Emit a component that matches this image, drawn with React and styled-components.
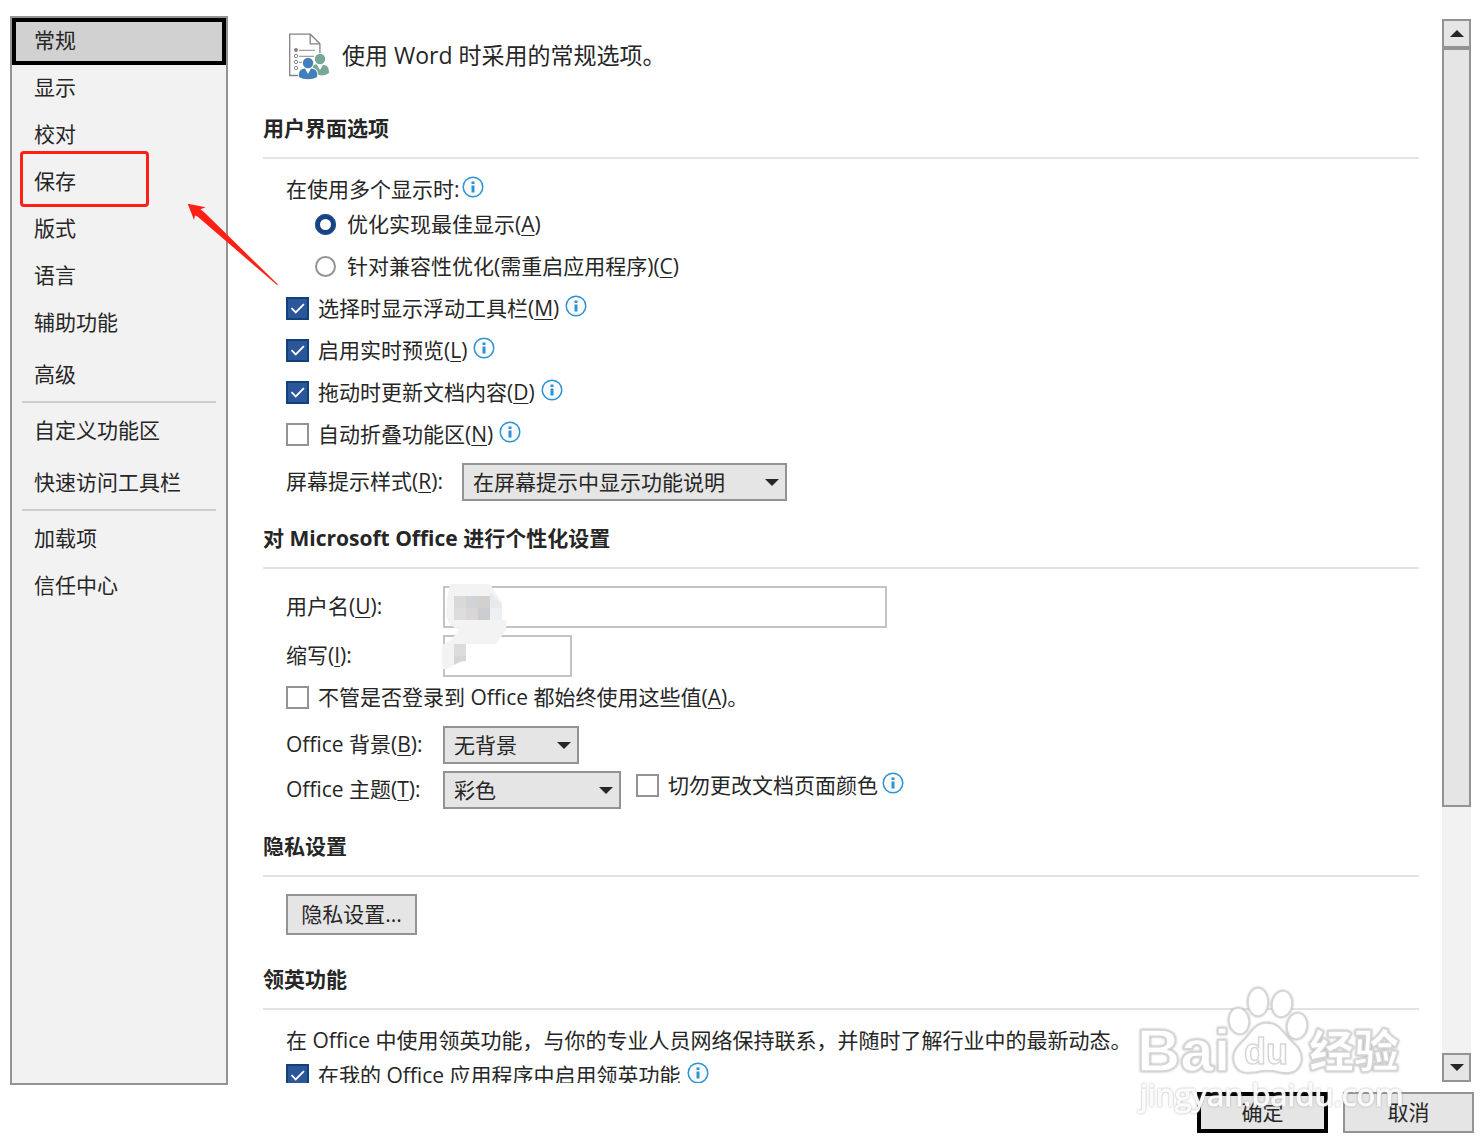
import { useState } from "react";
import styled, { createGlobalStyle, css } from "styled-components";

const GlobalStyle = createGlobalStyle`
  * {
    box-sizing: border-box;
  }

  body {
    margin: 0;
    background: #fff;
    color: #262626;
    font-family: "Open Sans", "Noto Sans CJK SC", sans-serif;
    font-size: 21px;
    line-height: 28px;
  }

  button,
  input,
  select {
    margin: 0;
    font: inherit;
    color: inherit;
    border-radius: 0;
  }
`;

const Page = styled.div`
  display: flex;
  flex-direction: column;
  height: 100vh;
  padding: 16px 8px 13px 10px;
  position: relative;
  overflow: hidden;
`;

const Body = styled.div`
  display: flex;
  flex: 1;
  min-height: 0;
`;

const Sidebar = styled.nav`
  position: relative;
  flex: 0 0 218px;
  border: 2px solid #939393;
  background: #f2f2f2;
`;

const NavItem = styled.button`
  display: block;
  position: relative;
  width: 100%;
  height: 47px;
  padding: 0 18px 3px;
  border: 4px solid ${(props) => (props.$active ? "#000" : "transparent")};
  background: ${(props) => (props.$active ? "#d1d1d1" : "transparent")};
  text-align: left;
  margin-top: ${(props) => (props.$spaced ? "5px" : "0")};
`;

const NavDivider = styled.hr`
  height: 2px;
  margin: 2px 10px 5px;
  border: 0;
  background: #cfcfcf;
`;

const Highlight = styled.span`
  position: absolute;
  top: -12px;
  left: 4px;
  width: 129px;
  height: 56px;
  border: 3px solid #ff2015;
  border-radius: 4px;
`;

const Arrow = styled.svg`
  position: absolute;
  top: 184px;
  left: 174px;
  z-index: 1;
  pointer-events: none;
`;

const Content = styled.main`
  flex: 1;
  min-width: 0;
  margin-bottom: 2px;
  padding: 16px 23px 0 35px;
  overflow: hidden;
`;

const PageHeader = styled.header`
  display: flex;
  align-items: center;
  gap: 12px;
  height: 48px;
  padding-left: 26px;
  margin-bottom: 35px;
`;

const PageTitle = styled.h1`
  margin: 0;
  padding-bottom: 2px;
  font-size: 23px;
  font-weight: 400;
`;

const Section = styled.section`
  margin-bottom: ${(props) => (props.$roomy ? "31px" : "24px")};
`;

const SectionTitle = styled.h2`
  margin: 0;
  padding-bottom: 16px;
  border-bottom: 2px solid #e3e3e3;
  font-size: 21px;
  font-weight: 700;
  line-height: 26px;
`;

const SectionBody = styled.div`
  padding: 17px 0 0 23px;
`;

const TextLine = styled.p`
  display: flex;
  align-items: center;
  gap: 2px;
  margin: 0;
  height: 27px;
  padding-bottom: 2px;
  white-space: nowrap;
`;

const OptionLine = styled.div`
  display: flex;
  align-items: center;
  height: ${(props) => (props.$compact ? "28px" : "42px")};
  gap: ${(props) => (props.$compact ? "4px" : "6px")};
  padding-left: ${(props) => (props.$indent ? "29px" : "0")};
  margin-left: ${(props) => (props.$compact ? "15px" : "0")};
  align-self: flex-start;
`;

const OptionLabel = styled.label`
  display: flex;
  align-items: center;
  gap: ${(props) => (props.$radio ? "11px" : "9px")};
  white-space: nowrap;
`;

const CheckHolder = styled.span`
  display: grid;
  margin-top: 1px;

  > * {
    grid-area: 1 / 1;
  }

  svg {
    visibility: hidden;
    pointer-events: none;
  }

  input:checked + svg {
    visibility: visible;
  }
`;

const CheckInput = styled.input`
  appearance: none;
  width: 23px;
  height: 23px;
  border: 2px solid #939393;
  background: #fff;

  &:checked {
    border-color: #124079;
    background: #2b579a;
  }
`;

const RadioInput = styled.input`
  appearance: none;
  width: 21px;
  height: 21px;
  border: 2px solid #939393;
  border-radius: 50%;
  background: #fff;

  &:checked {
    border: 5px solid #174481;
    outline: 1px solid #2b579a;
    outline-offset: -1px;
  }
`;

const InfoMark = styled.svg`
  flex: none;
  margin-bottom: 4px;
`;

const AccessKey = styled.u`
  text-decoration-thickness: 1px;
  text-underline-offset: 3px;
`;

const FieldRow = styled.div`
  display: flex;
  align-items: center;
  margin-top: ${(props) => (props.$spaced ? "8px" : "0")};
  margin-bottom: ${(props) => (props.$last ? "0" : "7px")};
`;

const FieldLabel = styled.label`
  flex: none;
  width: ${(props) => (props.$auto ? "auto" : "157px")};
  margin-right: ${(props) => (props.$auto ? "19px" : "0")};
  padding-bottom: 2px;
`;

const fieldBorder = css`
  border: 2px solid #939393;
  background: #e5e5e5;
`;

const TextInput = styled.input`
  width: ${(props) => props.$width};
  height: 42px;
  padding: 0 9px;
  border: 2px solid #c3c3c3;
  background: #fff;
`;

const SelectHolder = styled.span`
  position: relative;
  display: block;
  width: ${(props) => props.$width};

  svg {
    position: absolute;
    top: 16px;
    right: 8px;
    pointer-events: none;
  }
`;

const SelectInput = styled.select`
  ${fieldBorder}
  appearance: none;
  display: block;
  width: 100%;
  height: 38px;
  padding: 0 30px 0 9px;
`;

const Button = styled.button`
  ${fieldBorder}
  width: 131px;
  height: 41px;
  padding: 0 0 2px;

  ${(props) =>
    props.$primary &&
    css`
      border: 4px solid #000;
    `}
`;

const NameFields = styled.div`
  position: relative;
  margin-bottom: -8px;
`;

const Mosaic = styled.svg`
  position: absolute;
  top: -2px;
  left: 156px;
  pointer-events: none;
`;

const ScrollBar = styled.div`
  display: flex;
  flex-direction: column;
  flex: 0 0 29px;
  margin: 3px 3px 3px 0;
  background: #f2f2f2;
`;

const ScrollButton = styled.button`
  ${fieldBorder}
  display: flex;
  align-items: center;
  justify-content: center;
  height: 29px;
  padding: 0;
`;

const ScrollTrack = styled.div`
  flex: 1;
`;

const ScrollThumb = styled.div`
  ${fieldBorder}
  height: 75.5%;
`;

const Footer = styled.footer`
  display: flex;
  justify-content: flex-end;
  gap: 15px;
  margin-top: 7px;
`;

const Watermark = styled.svg`
  position: absolute;
  right: 72px;
  bottom: 26px;
  pointer-events: none;
`;

const navGroups = [
  [
    { name: "常规" },
    { name: "显示" },
    { name: "校对" },
    { name: "保存", highlighted: true },
    { name: "版式" },
    { name: "语言" },
    { name: "辅助功能" },
    { name: "高级", spaced: true }
  ],
  [{ name: "自定义功能区" }, { name: "快速访问工具栏", spaced: true }],
  [{ name: "加载项" }, { name: "信任中心" }]
];

const Info = () => (
  <InfoMark width="22" height="22" viewBox="0 0 22 22" aria-hidden="true">
    <circle cx="11" cy="11" r="9.8" fill="#f8fafc" stroke="#2e93d3" strokeWidth="1.5" />
    <path d="M9.5 5.5h3v2.500h-3zM9.500 9.500h3v7h-3z" fill="#2e93d3" />
  </InfoMark>
);

const Triangle = ({ up }) => (
  <svg width="14" height="7" viewBox="0 0 14 7" aria-hidden="true">
    <path d={up ? "M0 7h14L7 0z" : "M0 0h14L7 7z"} fill="#262626" />
  </svg>
);

const Key = ({ letter, end = "" }) => (
  <>
    (<AccessKey>{letter}</AccessKey>){end}
  </>
);

const CheckOption = ({ children, checked, info, compact }) => (
  <OptionLine $compact={compact}>
    <OptionLabel>
      <CheckHolder>
        <CheckInput type="checkbox" defaultChecked={checked} />
        <svg width="23" height="23" viewBox="0 0 23 23">
          <path d="M5.5 11.2l4.2 4.2 8.2-8.2" fill="none" stroke="#fff" strokeWidth="1.8" />
        </svg>
      </CheckHolder>
      <span>{children}</span>
    </OptionLabel>
    {info && <Info />}
  </OptionLine>
);

const RadioOption = ({ children, checked }) => (
  <OptionLine $indent>
    <OptionLabel $radio>
      <RadioInput type="radio" name="displays" defaultChecked={checked} />
      <span>{children}</span>
    </OptionLabel>
  </OptionLine>
);

const Select = ({ id, width, options }) => (
  <SelectHolder $width={width}>
    <SelectInput id={id}>
      {options.map((option) => (
        <option key={option}>{option}</option>
      ))}
    </SelectInput>
    <Triangle />
  </SelectHolder>
);

const PeopleIcon = () => (
  <svg width="41" height="47" viewBox="0 0 41 47" aria-hidden="true">
    <path d="M9 42.5H.7V1.2h20.6l9.6 9.6V20" fill="#fff" stroke="#828282" strokeWidth="1.3" />
    <path d="M21.2 1.2v9.6h9.7" fill="none" stroke="#828282" strokeWidth="1.3" />
    <path d="M10 17.3h16M10 23.3h15M10 29.3h3" stroke="#8a8a8a" />
    <circle cx="7" cy="17" r="2" fill="#828282" />
    <g fill="none" stroke="#8a8a8a">
      <circle cx="7" cy="23" r="1.7" />
      <circle cx="7" cy="29" r="1.7" />
      <circle cx="7" cy="35" r="1.7" />
    </g>
    <circle cx="31" cy="26" r="5.2" fill="#76a797" />
    <path d="M23 33c4-2 4-2 5-1l3 5 3-5c4 0 6 2 6 8-4 3-9 3-12 1z" fill="#76a797" />
    <circle cx="19" cy="30" r="6" fill="#fff" />
    <path d="M9 45v-3c0-5 3-7 6-7h8c4 0 6 2 6 7v3z" fill="#fff" />
    <circle cx="19" cy="30" r="5.2" fill="#447fbb" />
    <path d="M10 44c-.6-5 1-8 6-8.500l3 5.500 3-5.500c5 .5 7 3 6 8.500-5 3-13 3-18 0z" fill="#447fbb" />
  </svg>
);

const NameMosaic = () => (
  <Mosaic width="68" height="87" viewBox="0 0 68 87" aria-hidden="true">
    <path
      d="M8 0h40l12 19v17h5l-1 10-10 14H24v15c-6 2-9 4-13 7s-7 3-11 3V61l9-5 8-10-9-5-4-9 1-17z"
      fill="#f3f3f3"
    />
    <path d="M12 12h12v12H12z" fill="#dbd9d7" />
    <path d="M24 12h12v12H24z" fill="#d0d3d5" />
    <path d="M36 12h12v12H36z" fill="#d3d0ce" />
    <path d="M12 24h12v12H12z" fill="#dedddb" />
    <path d="M24 24h12v12H24z" fill="#d8d7d5" />
    <path d="M36 24h12v12H36z" fill="#cacccf" />
    <path d="M48 8l12 12v4H48z" fill="#e7eaec" />
    <path d="M48 24h12v12H48z" fill="#edf0f2" />
    <path d="M12 60h12v12H12z" fill="#dcdcdc" />
    <path d="M12 72h12v5c-5 0-8 2-12 4z" fill="#d6d6d6" />
  </Mosaic>
);

const SiteWatermark = () => (
  <Watermark width="281" height="140" viewBox="0 0 281 140" aria-hidden="true">
    <defs>
      <filter id="glow" x="-5%" y="-10%" width="110%" height="120%">
        <feDropShadow dx="0" dy="0" stdDeviation="1" floodColor="#888" floodOpacity="0.8" />
      </filter>
    </defs>
    <g fill="#fff" stroke="#d6d6d6" strokeWidth="1.5" filter="url(#glow)">
      <ellipse cx="129" cy="22" rx="10" ry="14" />
      <ellipse cx="153" cy="24" rx="10" ry="13" transform="rotate(8 153 24)" />
      <ellipse cx="110" cy="41" rx="10" ry="13" transform="rotate(-8 110 41)" />
      <ellipse cx="168" cy="46" rx="10" ry="13" transform="rotate(8 168 46)" />
      <path d="M138 43c-13 0-16 11-24 18-7 7-11 13-9 21 3 12 13 11 22 10 8-2 15-2 23 0 9 2 19 1 22-10 2-9-3-15-10-21-8-8-12-18-24-18z" />
      <text x="8" y="91" fontFamily="Liberation Sans, sans-serif" fontWeight="700" fontSize="60">Bai</text>
      <text x="115" y="84" fontFamily="Liberation Sans, sans-serif" fontWeight="700" fontSize="36">du</text>
      <text x="180" y="88" fontFamily="Noto Sans CJK SC, sans-serif" fontWeight="900" fontSize="45">经验</text>
    </g>
    <text
      x="11"
      y="126"
      fill="#fff"
      fillOpacity="0.9"
      stroke="#fff"
      strokeOpacity="0.8"
      fontFamily="Open Sans, sans-serif"
      fontSize="31"
      filter="url(#glow)"
    >
      jingyan.baidu.com
    </text>
  </Watermark>
);

const App = () => {
  const [active, setActive] = useState("常规");

  return (
    <Page>
      <GlobalStyle />
      <Body>
        <Sidebar>
          {navGroups.map((group, index) => (
            <div key={group[0].name}>
              {index > 0 && <NavDivider />}
              {group.map((item) => (
                <NavItem
                  key={item.name}
                  type="button"
                  $active={item.name === active}
                  $spaced={item.spaced}
                  onClick={() => setActive(item.name)}
                >
                  {item.name}
                  {item.highlighted && <Highlight />}
                </NavItem>
              ))}
            </div>
          ))}
          <Arrow width="94" height="86" viewBox="0 0 94 86" aria-hidden="true">
            <path d="M1.700 1.700L19.700 5.300 14.500 7.200 19 11 92 82.500 91 83 11.500 14.500 9 13.500 8 18z" fill="#ff2015" />
          </Arrow>
        </Sidebar>

        <Content>
          <PageHeader>
            <PeopleIcon />
            <PageTitle>使用 Word 时采用的常规选项。</PageTitle>
          </PageHeader>

          <Section>
            <SectionTitle>用户界面选项</SectionTitle>
            <SectionBody>
              <TextLine>
                在使用多个显示时:
                <Info />
              </TextLine>
              <RadioOption checked>
                优化实现最佳显示
                <Key letter="A" />
              </RadioOption>
              <RadioOption>
                针对兼容性优化(需重启应用程序)
                <Key letter="C" />
              </RadioOption>
              <CheckOption checked info>
                选择时显示浮动工具栏
                <Key letter="M" />
              </CheckOption>
              <CheckOption checked info>
                启用实时预览
                <Key letter="L" />
              </CheckOption>
              <CheckOption checked info>
                拖动时更新文档内容
                <Key letter="D" />
              </CheckOption>
              <CheckOption info>
                自动折叠功能区
                <Key letter="N" />
              </CheckOption>
              <FieldRow $spaced $last>
                <FieldLabel htmlFor="tips" $auto>
                  屏幕提示样式
                  <Key letter="R" end=":" />
                </FieldLabel>
                <Select id="tips" width="325px" options={["在屏幕提示中显示功能说明"]} />
              </FieldRow>
            </SectionBody>
          </Section>

          <Section>
            <SectionTitle>对 Microsoft Office 进行个性化设置</SectionTitle>
            <SectionBody>
              <NameFields>
                <FieldRow>
                  <FieldLabel htmlFor="user">
                    用户名
                    <Key letter="U" end=":" />
                  </FieldLabel>
                  <TextInput id="user" type="text" $width="444px" />
                </FieldRow>
                <FieldRow>
                  <FieldLabel htmlFor="initials">
                    缩写
                    <Key letter="I" end=":" />
                  </FieldLabel>
                  <TextInput id="initials" type="text" $width="129px" />
                </FieldRow>
                <NameMosaic />
              </NameFields>
              <CheckOption>
                不管是否登录到 Office 都始终使用这些值
                <Key letter="A" end="。" />
              </CheckOption>
              <FieldRow $spaced>
                <FieldLabel htmlFor="background">
                  Office 背景
                  <Key letter="B" end=":" />
                </FieldLabel>
                <Select id="background" width="136px" options={["无背景"]} />
              </FieldRow>
              <FieldRow $last>
                <FieldLabel htmlFor="theme">
                  Office 主题
                  <Key letter="T" end=":" />
                </FieldLabel>
                <Select id="theme" width="178px" options={["彩色"]} />
                <CheckOption info compact>
                  切勿更改文档页面颜色
                </CheckOption>
              </FieldRow>
            </SectionBody>
          </Section>

          <Section $roomy>
            <SectionTitle>隐私设置</SectionTitle>
            <SectionBody>
              <Button type="button">隐私设置...</Button>
            </SectionBody>
          </Section>

          <Section>
            <SectionTitle>领英功能</SectionTitle>
            <SectionBody>
              <TextLine>在 Office 中使用领英功能，与你的专业人员网络保持联系，并随时了解行业中的最新动态。</TextLine>
              <CheckOption checked info>
                在我的 Office 应用程序中启用领英功能
              </CheckOption>
            </SectionBody>
          </Section>
        </Content>

        <ScrollBar>
          <ScrollButton type="button">
            <Triangle up />
          </ScrollButton>
          <ScrollTrack>
            <ScrollThumb />
          </ScrollTrack>
          <ScrollButton type="button">
            <Triangle />
          </ScrollButton>
        </ScrollBar>
      </Body>

      <Footer>
        <Button type="button" $primary>确定</Button>
        <Button type="button">取消</Button>
      </Footer>
      <SiteWatermark />
    </Page>
  );
};

export default App;
